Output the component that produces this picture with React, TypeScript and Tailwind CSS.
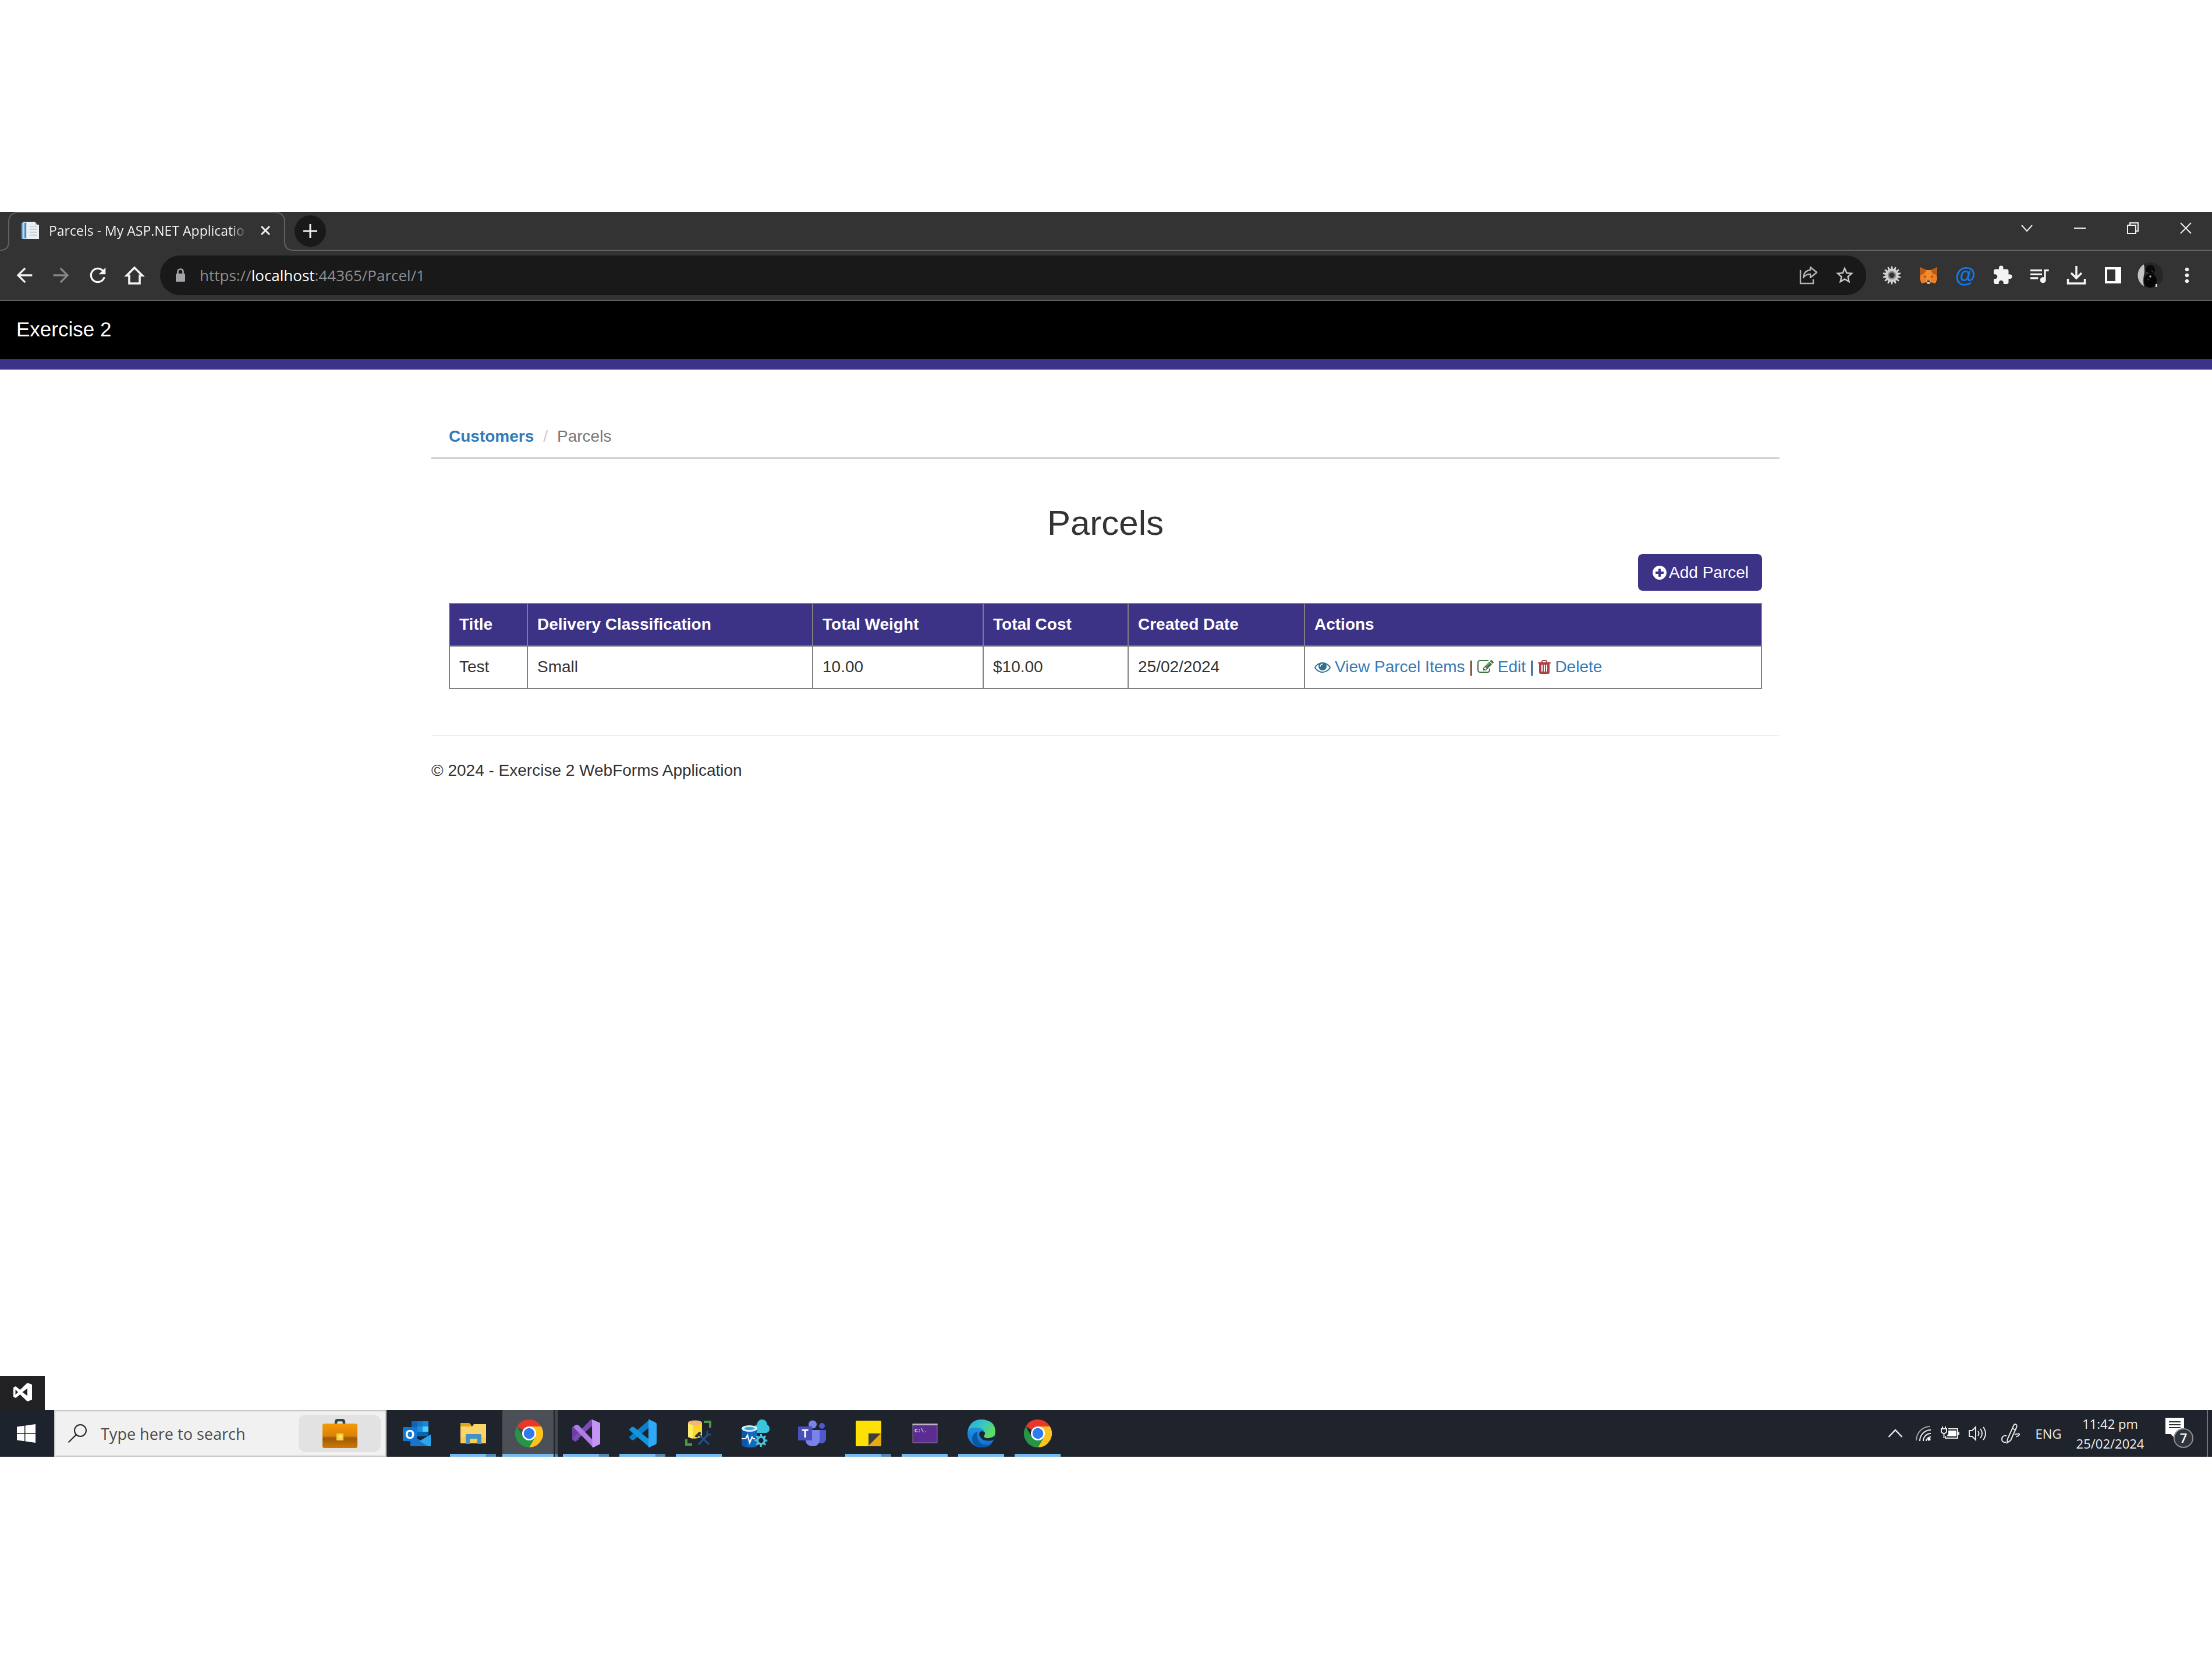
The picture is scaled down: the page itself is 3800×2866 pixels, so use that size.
import type { ReactNode } from "react";
import {
  MdArrowBack,
  MdArrowForward,
  MdExtension,
  MdMoreVert,
  MdQueueMusic,
  MdRefresh,
  MdStarBorder,
} from "react-icons/md";

/* ---------- Glyphs used inside the web page ---------- */

function Glyph({ d, className }: { d: string; className: string }) {
  return (
    <svg viewBox="0 0 1792 1792" fill="currentColor" aria-hidden="true" className={className}>
      <path d={d} />
    </svg>
  );
}

const EYE =
  "M1664 960q-152-236-381-353 61 104 61 225 0 185-131.5 316.5t-316.5 131.5-316.5-131.5-131.5-316.5q0-121 61-225-229 117-381 353 133 205 333.5 326.5t434.5 121.5 434.5-121.5 333.5-326.5zm-720-384q0-20-14-34t-34-14q-125 0-214.5 89.5t-89.5 214.5q0 20 14 34t34 14 34-14 14-34q0-86 61-147t147-61q20 0 34-14t14-34zm848 384q0 34-20 69-140 230-376.5 368.5t-499.5 138.5-499.5-139-376.5-368q-20-35-20-69t20-69q140-229 376.5-368t499.5-139 499.5 139 376.5 368q20 35 20 69z";
const PLUS =
  "M1344 960v-128q0-26-19-45t-45-19h-256v-256q0-26-19-45t-45-19h-128q-26 0-45 19t-19 45v256h-256q-26 0-45 19t-19 45v128q0 26 19 45t45 19h256v256q0 26 19 45t45 19h128q26 0 45-19t19-45v-256h256q26 0 45-19t19-45zm320-64q0 209-103 385.5t-279.5 279.5-385.5 103-385.5-103-279.5-279.5-103-385.5 103-385.5 279.5-279.5 385.5-103 385.5 103 279.5 279.5 103 385.5z";
const TRASH =
  "M704 1376v-704q0-14-9-23t-23-9h-64q-14 0-23 9t-9 23v704q0 14 9 23t23 9h64q14 0 23-9t9-23zm256 0v-704q0-14-9-23t-23-9h-64q-14 0-23 9t-9 23v704q0 14 9 23t23 9h64q14 0 23-9t9-23zm256 0v-704q0-14-9-23t-23-9h-64q-14 0-23 9t-9 23v704q0 14 9 23t23 9h64q14 0 23-9t9-23zm-544-992h448l-48-117q-7-9-17-11h-317q-10 2-17 11zm928 32v64q0 14-9 23t-23 9h-96v948q0 83-47 143.5t-113 60.5h-832q-66 0-113-58.5t-47-141.5v-952h-96q-14 0-23-9t-9-23v-64q0-14 9-23t23-9h309l70-167q15-37 54-63t79-26h320q40 0 79 26t54 63l70 167h309q14 0 23 9t9 23z";
const PENCIL =
  "M888 1184l116-116-152-152-116 116v56h96v96h56zm440-720q-16-16-33 1l-350 350q-17 17-1 33t33-1l350-350q17-17 1-33zm80 594v190q0 119-84.5 203.5t-203.5 84.5h-832q-119 0-203.5-84.5t-84.5-203.5v-832q0-119 84.5-203.5t203.5-84.5h832q63 0 117 25 15 7 18 23 3 17-9 29l-49 49q-14 14-32 8-23-6-45-6h-832q-66 0-113 47t-47 113v832q0 66 47 113t113 47h832q66 0 113-47t47-113v-126q0-13 9-22l64-64q15-15 35-7t20 29zm-96-738l288 288-672 672h-288v-288zm444 132l-92 92-288-288 92-92q28-28 68-28t68 28l152 152q28 28 28 68t-28 68z";

/* ---------- Browser chrome icons ---------- */

function PageFavicon() {
  return (
    <svg viewBox="0 0 32 32" className="size-8 shrink-0" aria-hidden="true">
      <path d="M1 3l7-2v30l-7-1z" fill="#7fb2d6" />
      <path d="M4 1h9v30H4z" fill="#c5dcec" />
      <path d="M6 3h3v26H6z" fill="#4b86b4" />
      <path d="M10 1h14l4 5h3v25H10z" fill="#e9eef2" />
      <path d="M15 9h12M15 14h13M15 19h13M15 24h13" stroke="#c3c9ce" strokeWidth="1.5" />
      <path d="M24 1l4 5h-4z" fill="#b9c3ca" />
    </svg>
  );
}

function LockIcon() {
  return (
    <svg viewBox="0 0 18 24" className="h-6 w-[18px]" aria-hidden="true">
      <path d="M4.500 10V6q0-4.500 4.500-4.500T13.500 6v4" fill="none" stroke="#a3a3a8" strokeWidth="2.600" />
      <rect x="1" y="9" width="16" height="14" rx="1.500" fill="#a3a3a8" />
    </svg>
  );
}

function HomeIcon() {
  return (
    <svg viewBox="0 0 36 36" className="size-9" aria-hidden="true" fill="none" stroke="#f4f4f4" strokeWidth="3.6">
      <path d="M18 5L4.500 18.500H9V32h18V18.500h4.500z" />
    </svg>
  );
}

function ShareIcon() {
  return (
    <svg viewBox="0 0 36 36" className="size-9" aria-hidden="true" fill="none" stroke="#b4b4b4" strokeWidth="2.400">
      <path d="M4 9v23h22v-7" />
      <path d="M21 4l11 9-11 9v-6q-8 0-12 6 1-12 12-13z" strokeLinejoin="round" />
    </svg>
  );
}

const GEAR_TEETH = Array.from({ length: 14 }, (_, i) => (i * 360) / 14);

function GearIcon() {
  return (
    <svg viewBox="0 0 32 32" className="size-8" aria-hidden="true">
      {GEAR_TEETH.map((a) => (
        <path key={a} d="M14 6L15 0.500h2L18 6z" fill="#d9d9d9" transform={`rotate(${a} 16 16)`} />
      ))}
      <circle cx="16" cy="16" r="8.500" fill="none" stroke="#cfcfcf" strokeWidth="5.500" />
      <circle cx="16" cy="16" r="6" fill="none" stroke="#8d8d8d" strokeWidth="2.500" />
    </svg>
  );
}

function FoxIcon() {
  return (
    <svg viewBox="0 0 32 32" className="size-8" aria-hidden="true">
      <path d="M1 2l11 5h8l11-5-1 14 1 6-3 8-8-2h-8l-8 2-3-8 1-6z" fill="#ef7f22" />
      <path d="M1 2l11 6-5 6-5 1zM31 2L20 8l5 6 5 1z" fill="#b85c1c" />
      <path d="M12 7h8l1 12-2 7h-6l-2-7z" fill="#f68a28" />
      <path d="M8 16l5 3-4 1zM24 16l-5 3 4 1z" fill="#8a4a1c" />
      <path d="M12 25h8l-1 5q-3 2-6 0z" fill="#d8c4b2" />
      <path d="M13.500 25h5l-.5 3h-4z" fill="#3a2a24" />
    </svg>
  );
}

function DownloadIcon() {
  return (
    <svg viewBox="0 0 36 36" className="size-9" aria-hidden="true" fill="none" stroke="#f4f4f4" strokeWidth="3.500">
      <path d="M18 2v20M9 14l9 9 9-9M3.500 24v8h29v-8" />
    </svg>
  );
}

function SidePanelIcon() {
  return (
    <svg viewBox="0 0 28 28" className="size-7" aria-hidden="true">
      <path fillRule="evenodd" d="M0 0h28v28H0zM4 4v20h14V4z" fill="#fff" />
    </svg>
  );
}

function AvatarIcon() {
  return (
    <svg viewBox="0 0 44 44" className="size-11" aria-hidden="true">
      <circle cx="22" cy="22" r="22" fill="#262626" />
      <path d="M11 3.200A22 22 0 0 0 11 40.800Q9 30 11 22T11 3.200z" fill="#c4c4c4" />
      <ellipse cx="22" cy="13" rx="8" ry="9" fill="#0a0a0a" />
      <ellipse cx="22" cy="31" rx="11" ry="12" fill="#060606" />
      <circle cx="22" cy="24" r="1.800" fill="#bbb" />
      <path d="M15 17l4 2M24 14l3 3M17 29l3 1" stroke="#444" strokeWidth="1.500" />
      <path d="M31 37h3v5h-3z" fill="#ddd" />
    </svg>
  );
}

/* ---------- Taskbar icons ---------- */

function VisualStudioGlyph() {
  return (
    <svg viewBox="0 0 32 32" className="size-8" aria-hidden="true">
      <path
        fillRule="evenodd"
        d="M24 0l8 3v26l-8 3L11.500 20 4 26l-4-2V8l4-2 7.500 6zM24 9.500L15.500 16 24 22.500zM3.500 11.500v9L8 16z"
        fill="#fff"
      />
    </svg>
  );
}

function WindowsIcon() {
  return (
    <svg viewBox="0 0 32 32" className="size-8" aria-hidden="true" fill="#fff">
      <path d="M0 4.500L13 2.800v12.500H0zM14.500 2.600L32 0v15.300H14.500zM0 16.800h13v12.400L0 27.500zM14.500 16.800H32V32l-17.500-2.500z" />
    </svg>
  );
}

function SearchIcon() {
  return (
    <svg viewBox="0 0 32 32" className="size-8 shrink-0" aria-hidden="true" fill="none" stroke="#222" strokeWidth="2">
      <circle cx="21" cy="11" r="10" />
      <path d="M14 18L0.500 31.500" />
    </svg>
  );
}

function BriefcaseIcon() {
  return (
    <svg viewBox="0 0 60 50" className="h-[50px] w-[60px]" aria-hidden="true">
      <defs>
        <linearGradient id="leather" x1="0" y1="0" x2="0" y2="1">
          <stop offset="0" stopColor="#f59a07" />
          <stop offset=".5" stopColor="#dc8204" />
          <stop offset=".6" stopColor="#9c5a0a" />
          <stop offset="1" stopColor="#d07a05" />
        </linearGradient>
      </defs>
      <path d="M23 10V6q0-4 4-4h6q4 0 4 4v4" fill="none" stroke="#2f4446" strokeWidth="4.500" />
      <rect y="8" width="60" height="42" rx="3" fill="url(#leather)" />
      <rect x="24" y="25" width="12" height="12" rx="1.500" fill="#f8cf3a" />
      <rect x="28" y="28" width="5" height="5" fill="#ffe887" />
    </svg>
  );
}

function OutlookIcon() {
  return (
    <svg viewBox="0 0 48 48" className="size-12" aria-hidden="true">
      <path d="M15 3h29v26H15z" fill="#1066b5" />
      <path d="M25 3h9v9h-9z" fill="#1478c8" />
      <path d="M34 3h10v9H34z" fill="#1a86d6" />
      <path d="M25 12h9v9h-9z" fill="#1f8fe0" />
      <path d="M34 12h10v9H34z" fill="#50d0fb" />
      <path d="M25 21h19v8H25z" fill="#0364b8" />
      <path d="M13 26l17 10 18-10v20H13z" fill="#1784d9" />
      <path d="M13 46l35-20v20z" fill="#2ba6ee" />
      <path d="M13 27v19h30z" fill="#1a72c9" />
      <rect y="13" width="24" height="24" rx="1.500" fill="#0f78d4" />
      <text x="12" y="32.500" textAnchor="middle" fontFamily="Open Sans" fontSize="21" fontWeight="bold" fill="#fff">
        O
      </text>
    </svg>
  );
}

function ExplorerIcon() {
  return (
    <svg viewBox="0 0 48 48" className="size-12" aria-hidden="true">
      <path d="M2 6h15l4 4v6H2z" fill="#e0a51c" />
      <path d="M2 12h20l3-4h21v33H2z" fill="#fbd56b" />
      <path d="M2 30h44v11H2z" fill="#f8cb57" />
      <path d="M11 27q0-2 2-2h23q2 0 2 2v15h-7v-9H18v9h-7z" fill="#3f93c6" />
    </svg>
  );
}

function ChromeIcon() {
  return (
    <svg viewBox="0 0 48 48" className="size-12" aria-hidden="true">
      <path d="M24 24L3.200 12A24 24 0 0 1 44.800 12z" fill="#e8372b" />
      <path d="M24 12h20.800A24 24 0 0 1 24 48l10.400-18z" fill="#fcc31e" />
      <path d="M3.200 12A24 24 0 0 0 24 48l10.400-18-20.800 0z" fill="#279447" />
      <circle cx="24" cy="24" r="12" fill="#fff" />
      <circle cx="24" cy="24" r="9.300" fill="#2f7af0" />
    </svg>
  );
}

function VisualStudioIcon() {
  return (
    <svg viewBox="0 0 48 48" className="size-12" aria-hidden="true">
      <path d="M0 13l5-3 6 3v22l-6 3-5-3z" fill="#6a3f9f" />
      <path d="M5 38l29-27V0h-2L1 32z" fill="#7a4cb3" />
      <path d="M5 10q3-2 6 0l25 26v12L2 13z" fill="#b07be6" />
      <path d="M34 0l14 6v36l-12 6-2-1z" fill="#b98af0" />
      <path d="M34 0l14 6v36l-12 6z" fill="#c79bf5" opacity=".7" />
    </svg>
  );
}

function VsCodeIcon() {
  return (
    <svg viewBox="0 0 48 48" className="size-12" aria-hidden="true">
      <path d="M1 31l4 4q2 1 4 0l27-22V0L1 30z" fill="#0b7fc9" />
      <path d="M1 17l4-4q2-1 4 0l27 22v13L1 18z" fill="#1494dc" />
      <path d="M35 0l11 5q2 1 2 3v32q0 2-2 3l-11 5q2-1 2-4V4q0-3-2-4z" fill="#2fa9f5" />
      <path d="M34 0h3v48h-3z" fill="#2fa9f5" />
    </svg>
  );
}

function SqlToolsIcon() {
  return (
    <svg viewBox="0 0 48 48" className="size-12" aria-hidden="true">
      <path d="M5 6v24q12 6 24-1V6z" fill="#fbd629" />
      <path d="M5 6v24q4 2 8 3V6z" fill="#fdeb6a" />
      <ellipse cx="17" cy="5.500" rx="12" ry="4" fill="#f4b27c" />
      <path d="M32 4h11v10M2 34v9h10" fill="none" stroke="#4c9a46" strokeWidth="4" />
      <path d="M23 43l17-18M24 26l17 17" stroke="#1c4f8f" strokeWidth="3.500" />
      <path d="M16 29l8-8 4 2-7 8z" fill="#1d3350" />
      <path d="M38 20v6h7" fill="none" stroke="#1c4f8f" strokeWidth="3" />
    </svg>
  );
}

const COG_TEETH = [0, 45, 90, 135, 180, 225, 270, 315];

function DataStudioIcon() {
  return (
    <svg viewBox="0 0 48 48" className="size-12" aria-hidden="true">
      <path d="M21 16q0-6 5-7 2-9 9-9 8 0 9 9 4 2 4 7 0 6-6 7H27q-6-1-6-7z" fill="#3cc4dc" />
      <path d="M0 16v28q6 5 16 4 8 0 11-3V16z" fill="#1469bd" />
      <path d="M0 16v28q4 3 9 4V16z" fill="#0c58a6" />
      <ellipse cx="13.500" cy="15.500" rx="13.500" ry="5.500" fill="#d6f4fa" />
      <ellipse cx="13.500" cy="15.500" rx="9" ry="2.800" fill="#3aa8d8" />
      <path d="M0 33h7l3-6 4 13 4-10 2 3h3" fill="none" stroke="#fff" strokeWidth="2.200" />
      {COG_TEETH.map((a) => (
        <path key={a} d="M32 25h2.800l.8 5h-4.400z" fill="#4cc3dd" transform={`rotate(${a} 33.300 36)`} />
      ))}
      <circle cx="33.300" cy="36" r="6" fill="#1f232b" stroke="#4cc3dd" strokeWidth="3.500" />
    </svg>
  );
}

function TeamsIcon() {
  return (
    <svg viewBox="0 0 48 48" className="size-12" aria-hidden="true">
      <circle cx="25" cy="8.500" r="7" fill="#7b83eb" />
      <circle cx="41" cy="11" r="5" fill="#5059c9" />
      <path d="M34 18h14v15q-1 8-8 8-5 0-6-3z" fill="#5059c9" />
      <path d="M13 18h24v17q-1 11-12 11-9 0-12-8z" fill="#7b83eb" />
      <path d="M0 12h24v24H0z" fill="#4a4fbd" />
      <text x="12" y="31" textAnchor="middle" fontFamily="Open Sans" fontSize="20" fontWeight="bold" fill="#fff">
        T
      </text>
    </svg>
  );
}

function StickyNotesIcon() {
  return (
    <svg viewBox="0 0 48 48" className="size-12" aria-hidden="true">
      <rect x="2" y="2" width="44" height="44" rx="2" fill="#fde005" />
      <path d="M24 24h22v22H24z" fill="#e5ac12" />
      <path d="M24 24h21L24 45z" fill="#403d3a" />
    </svg>
  );
}

function TerminalIcon() {
  return (
    <svg viewBox="0 0 48 48" className="size-12" aria-hidden="true">
      <path d="M3 8h42v32H3z" fill="#5c2d91" stroke="#8a7a9b" />
      <path d="M2.500 7h43v3h-43z" fill="#b9b3c0" />
      <text x="6" y="22" fontFamily="Liberation Mono" fontSize="9" fontWeight="bold" fill="#e8e0f0">
        {"C:\\."}
      </text>
    </svg>
  );
}

function EdgeIcon() {
  return (
    <svg viewBox="0 0 48 48" className="size-12" aria-hidden="true">
      <defs>
        <linearGradient id="edgeTop" x1="0" y1="0" x2="1" y2=".6">
          <stop offset="0" stopColor="#2aa7e0" />
          <stop offset=".5" stopColor="#38c6c4" />
          <stop offset="1" stopColor="#62dd58" />
        </linearGradient>
        <linearGradient id="edgeBody" x1="0" y1="0" x2="0" y2="1">
          <stop offset="0" stopColor="#2a9fe6" />
          <stop offset="1" stopColor="#0f6fd0" />
        </linearGradient>
      </defs>
      <circle cx="24" cy="24" r="24" fill="url(#edgeBody)" />
      <path d="M17 27q0 16 16 17 6 0 11-4-8 9-20 8Q8 46 8 32q1-8 9-11z" fill="#0c56a8" />
      <path d="M1 19Q5 0 24 0q23 1 24 20 0 10-12 12-8 0-8-3 2-2 2-5-1-9-12-10Q5 13 1 19z" fill="url(#edgeTop)" />
      <path d="M20 25q1-5 5-5 6 1 5 5-2 2-2 4 2 4 9 3 5 0 9-3l2 0q-2 6-6 7Q23 39 20 25z" fill="#1f232b" />
    </svg>
  );
}

/* ---------- System tray icons ---------- */

const tray = "fill-none stroke-[#e8e8e8] stroke-2";

function ChevronUpIcon() {
  return (
    <svg viewBox="0 0 26 16" className={`h-4 w-[26px] ${tray}`} aria-hidden="true">
      <path d="M1.500 14L13 2l11.500 12" strokeWidth="2.500" />
    </svg>
  );
}

function WifiIcon() {
  return (
    <svg viewBox="0 0 28 28" className={`size-7 ${tray}`} aria-hidden="true">
      <path d="M2 26A24 24 0 0 1 26 2" stroke="#9a9ea5" />
      <path d="M8 27A19 19 0 0 1 27 8M14 27A13 13 0 0 1 27 14M19 27a8 8 0 0 1 8-7" />
      <circle cx="24" cy="24" r="2.500" fill="#fff" stroke="none" />
    </svg>
  );
}

function BatteryIcon() {
  return (
    <svg viewBox="0 0 32 26" className={`h-[26px] w-8 ${tray}`} aria-hidden="true">
      <path d="M13 5h16v16H8v-3" />
      <path d="M30 10h2v6h-2z" fill="#e8e8e8" stroke="none" />
      <path d="M13 8h14v10H10l3-4z" fill="#fff" stroke="none" />
      <path d="M1 5h9v5q-1 3-4.500 3T1 10zM3 1v4M8 1v4M5.500 13v8" />
    </svg>
  );
}

function SpeakerIcon() {
  return (
    <svg viewBox="0 0 32 28" className={`h-7 w-8 ${tray}`} aria-hidden="true">
      <path d="M1 9h5l6-6v22l-6-6H1z" />
      <path d="M16 10q3 4 0 8M20 6q6 8 0 16" />
      <path d="M25 3q8 11 0 22" />
    </svg>
  );
}

function PenIcon() {
  return (
    <svg viewBox="0 0 34 36" className={`h-9 w-[34px] ${tray}`} aria-hidden="true">
      <path d="M25 2q4 1 2 6L17 30l-6 4 1-7L22 5q1-3 3-3zM20 9l5 3" />
      <path d="M10 22q-8-1-8 6 0 6 7 5M24 20q9-3 8 0-1 3-6 3" />
    </svg>
  );
}

function NotificationIcon() {
  return (
    <svg viewBox="0 0 48 56" className="h-14 w-12" aria-hidden="true">
      <path d="M0 1h32v28H16l-1 6-6-6H0z" fill="#fff" />
      <path d="M6 8h20M6 13h20M6 18h20" stroke="#2a2f36" strokeWidth="2" />
      <circle cx="31" cy="36" r="16" fill="#30343b" stroke="#8b8e93" strokeWidth="2" />
      <text x="31" y="44" textAnchor="middle" fontFamily="Open Sans" fontSize="22" fontWeight="600" fill="#fff">
        7
      </text>
    </svg>
  );
}

/* ---------- Browser window ---------- */

function ToolButton({ label, children }: { label: string; children: ReactNode }) {
  return (
    <button type="button" aria-label={label} className="flex flex-1 items-center justify-center text-[#f4f4f4]">
      {children}
    </button>
  );
}

function WindowButton({ label, d }: { label: string; d: string }) {
  return (
    <button type="button" aria-label={label} className="flex h-14 w-[91px] items-center justify-center">
      <svg viewBox="0 0 20 20" className="size-5 fill-none stroke-[#f0f0f0] stroke-2" aria-hidden="true">
        <path d={d} />
      </svg>
    </button>
  );
}

function TabStrip() {
  return (
    <div className="flex h-[67px] items-end">
      <svg viewBox="0 0 16 16" className="size-4 shrink-0 fill-none stroke-[#616161] stroke-2" aria-hidden="true">
        <path d="M0 15q15 0 15-15" />
      </svg>
      <div className="-ml-0.5 flex h-[67px] w-[476px] flex-col">
        <div className="flex h-[51px] shrink-0 items-start gap-4 rounded-t-2xl border-x-2 border-t-2 border-[#616161] pt-[14px] pr-4 pl-5">
          <PageFavicon />
          <span className="flex-1 bg-linear-to-r from-[#fafafa] from-92% to-[#444] bg-clip-text font-['Open_Sans','Noto_Sans',sans-serif] text-[23px] leading-8 whitespace-nowrap text-transparent">
            Parcels - My ASP.NET Applicatio
          </span>
          <button type="button" aria-label="Close tab" className="flex size-8 items-center justify-center">
            <svg viewBox="0 0 18 18" className="size-[18px] stroke-[#f0f0f0] stroke-3" aria-hidden="true">
              <path d="M2 2l14 14M16 2L2 16" />
            </svg>
          </button>
        </div>
      </div>
      <svg viewBox="0 0 16 16" className="-ml-0.5 size-4 shrink-0 fill-none stroke-[#616161] stroke-2" aria-hidden="true">
        <path d="M1 0q0 15 15 15" />
      </svg>
      <div className="flex h-full flex-1 items-start justify-between border-b-2 border-[#616161]">
        <button
          type="button"
          aria-label="New tab"
          className="mt-[6px] ml-0.5 flex size-[54px] items-center justify-center rounded-full bg-[#191919]"
        >
          <svg viewBox="0 0 24 24" className="size-6 stroke-[#f0f0f0] stroke-3" aria-hidden="true">
            <path d="M12 0v24M0 12h24" />
          </svg>
        </button>
        <div className="flex">
          <WindowButton label="Search tabs" d="M1 5l9 10 9-10" />
          <WindowButton label="Minimise" d="M0 10h20" />
          <WindowButton label="Restore" d="M1 5h14v14H1zM5 5V1h14v14h-4" />
          <WindowButton label="Close window" d="M1 1l18 18M19 1L1 19" />
        </div>
      </div>
    </div>
  );
}

function Toolbar() {
  return (
    <div className="flex h-[86px] items-center gap-3 border-b-2 border-[#5c5c5c] pr-[11px] pl-[10px]">
      <div className="flex w-[253px]">
        <ToolButton label="Back">
          <MdArrowBack className="size-10" />
        </ToolButton>
        <ToolButton label="Forward">
          <MdArrowForward className="size-10 text-[#868686]" />
        </ToolButton>
        <ToolButton label="Reload">
          <MdRefresh className="size-10" />
        </ToolButton>
        <ToolButton label="Home">
          <HomeIcon />
        </ToolButton>
      </div>
      <div className="flex h-[68px] flex-1 items-center rounded-full bg-[#191919] px-[26px]">
        <LockIcon />
        <div className="ml-6 flex-1 font-['Open_Sans','Noto_Sans',sans-serif] text-[26px] leading-10 text-[#8f8f8f]">
          https://<span className="text-white">localhost</span>:44365/Parcel/1
        </div>
        <button type="button" aria-label="Share" className="flex w-[62px] justify-center">
          <ShareIcon />
        </button>
        <button type="button" aria-label="Bookmark" className="-mr-5 flex w-[62px] justify-center">
          <MdStarBorder className="size-9 text-[#c8c8c8]" />
        </button>
      </div>
      <div className="flex w-[571px]">
        <ToolButton label="Settings extension">
          <GearIcon />
        </ToolButton>
        <ToolButton label="Wallet extension">
          <FoxIcon />
        </ToolButton>
        <ToolButton label="Mail extension">
          <span className="font-['Liberation_Sans',sans-serif] text-[36px] leading-9 font-bold text-[#0f7bf0]">@</span>
        </ToolButton>
        <ToolButton label="Extensions">
          <MdExtension className="size-9" />
        </ToolButton>
        <ToolButton label="Media">
          <MdQueueMusic className="size-10" />
        </ToolButton>
        <ToolButton label="Downloads">
          <DownloadIcon />
        </ToolButton>
        <ToolButton label="Side panel">
          <SidePanelIcon />
        </ToolButton>
        <ToolButton label="Profile">
          <AvatarIcon />
        </ToolButton>
        <ToolButton label="Menu">
          <MdMoreVert className="size-10" />
        </ToolButton>
      </div>
    </div>
  );
}

/* ---------- Web page ---------- */

const HEADINGS = ["Title", "Delivery Classification", "Total Weight", "Total Cost", "Created Date", "Actions"];
const PARCELS = [{ title: "Test", size: "Small", weight: "10.00", cost: "$10.00", created: "25/02/2024" }];
const cell = "border-2 border-[#808080] px-4 pt-[15px] pb-4 text-left";
const link = "text-[#337ab7]";

function ParcelTable() {
  return (
    <table className="mt-[21px] w-full table-fixed border-collapse">
      <colgroup>
        <col className="w-[134px]" />
        <col className="w-[490px]" />
        <col className="w-[293px]" />
        <col className="w-[249px]" />
        <col className="w-[303px]" />
        <col />
      </colgroup>
      <thead>
        <tr className="bg-[#3c3286] text-white">
          {HEADINGS.map((h) => (
            <th key={h} scope="col" className={cell}>
              {h}
            </th>
          ))}
        </tr>
      </thead>
      <tbody>
        {PARCELS.map((p) => (
          <tr key={p.title}>
            <td className={cell}>{p.title}</td>
            <td className={cell}>{p.size}</td>
            <td className={cell}>{p.weight}</td>
            <td className={cell}>{p.cost}</td>
            <td className={cell}>{p.created}</td>
            <td className={cell}>
              <div className="flex items-center gap-[7px]">
                <Glyph d={EYE} className="size-7 text-[#31708f]" />
                <a href="#view" className={link}>
                  View Parcel Items
                </a>
                <span>|</span>
                <Glyph d={PENCIL} className="size-7 text-[#3c763d]" />
                <a href="#edit" className={link}>
                  Edit
                </a>
                <span>|</span>
                <Glyph d={TRASH} className="-mx-[3px] size-7 text-[#a94442]" />
                <a href="#delete" className={link}>
                  Delete
                </a>
              </div>
            </td>
          </tr>
        ))}
      </tbody>
    </table>
  );
}

function WebPage() {
  return (
    <div className="flex-1 bg-white font-['Liberation_Sans',Arial,sans-serif] text-[28px] leading-10 text-[#333]">
      <nav className="flex h-[118px] items-center border-b-[18px] border-[#3c3286] bg-black px-7 pb-0.5">
        <a href="#home" className="text-[35px] text-white">
          Exercise 2
        </a>
      </nav>
      <main className="pr-[34px] pl-8">
        <div className="mx-auto max-w-[2316px]">
          <ol className="mt-[95px] flex border-b-2 border-[#bdbdbd] px-[30px] pb-4">
            <li>
              <a href="#customers" className="font-bold text-[#337ab7]">
                Customers
              </a>
            </li>
            <li className="px-4 text-[#ccc]">/</li>
            <li className="text-[#777]">Parcels</li>
          </ol>
          <div className="px-[30px]">
            <h2 className="mt-[78px] text-center text-[60px] leading-[66px]">Parcels</h2>
            <div className="mt-5 flex justify-end">
              <button
                type="button"
                className="flex h-[63px] items-center gap-0.5 rounded-lg bg-[#3c3286] px-[23px] text-white"
              >
                <Glyph d={PLUS} className="size-7" />
                Add Parcel
              </button>
            </div>
            <ParcelTable />
          </div>
          <hr className="mt-[79px] border-t-2 border-[#eee]" />
          <footer className="mt-[39px]">© 2024 - Exercise 2 WebForms Application</footer>
        </div>
      </main>
    </div>
  );
}

/* ---------- Taskbar ---------- */

type Task = { name: string; icon: ReactNode; open?: boolean; many?: boolean; active?: boolean };

const TASKS: Task[] = [
  { name: "Outlook", icon: <OutlookIcon /> },
  { name: "File Explorer", icon: <ExplorerIcon />, open: true, many: true },
  { name: "Chrome", icon: <ChromeIcon />, active: true },
  { name: "Visual Studio", icon: <VisualStudioIcon />, open: true, many: true },
  { name: "Visual Studio Code", icon: <VsCodeIcon />, open: true, many: true },
  { name: "SQL Server Management Studio", icon: <SqlToolsIcon />, open: true },
  { name: "Azure Data Studio", icon: <DataStudioIcon /> },
  { name: "Teams", icon: <TeamsIcon /> },
  { name: "Sticky Notes", icon: <StickyNotesIcon />, open: true, many: true },
  { name: "Command Prompt", icon: <TerminalIcon />, open: true },
  { name: "Edge", icon: <EdgeIcon />, open: true },
  { name: "Chrome profile", icon: <ChromeIcon />, open: true },
];

function TaskButton({ task }: { task: Task }) {
  if (task.active) {
    return (
      <button type="button" aria-label={task.name} className="flex h-full w-[97px] pl-0.5">
        <span className="flex h-full flex-1 items-end justify-center border-b-[5px] border-[#76b9ed] bg-[#4b4f56] pb-[11px] pl-1">
          {task.icon}
        </span>
        <span className="ml-0.5 h-full w-[5px] border-b-[5px] border-[#5686ad] bg-[#43474e]" />
      </button>
    );
  }
  return (
    <button type="button" aria-label={task.name} className="flex h-full w-[97px] flex-col items-center justify-end">
      {task.icon}
      <span className="mt-[11px] flex h-[5px] w-[79px]">
        {task.open && <span className="flex-1 bg-[#76b9ed]" />}
        {task.many && <span className="w-[17px] bg-[#5686ad]" />}
      </span>
    </button>
  );
}

function Taskbar() {
  return (
    <div className="flex h-20 items-stretch bg-[#1f232b] font-['Open_Sans','Noto_Sans',sans-serif] text-[#f0f0f0]">
      <button type="button" aria-label="Start" className="flex w-[93px] items-center justify-center bg-[#1c232c] pr-1">
        <WindowsIcon />
      </button>
      <div className="flex w-[571px] items-center border-2 border-[#c6c6c6] bg-[#f1f1f1] pr-2 pl-[22px]">
        <SearchIcon />
        <input
          type="text"
          aria-label="Search"
          placeholder="Type here to search"
          className="ml-6 h-12 w-0 flex-1 text-[27px] text-[#333] placeholder:text-[#4a4a4a]"
        />
        <div className="flex h-16 w-[141px] items-center justify-center rounded-xl bg-[#e2e2e2]">
          <BriefcaseIcon />
        </div>
      </div>
      <div className="ml-[3px] flex flex-1">
        {TASKS.map((t) => (
          <TaskButton key={t.name} task={t} />
        ))}
      </div>
      <div className="flex items-center">
        <span className="flex w-12 justify-center">
          <ChevronUpIcon />
        </span>
        <span className="flex w-12 justify-center">
          <WifiIcon />
        </span>
        <span className="flex w-11 justify-center">
          <BatteryIcon />
        </span>
        <span className="flex w-[52px] justify-center">
          <SpeakerIcon />
        </span>
        <span className="flex w-[60px] justify-center">
          <PenIcon />
        </span>
        <span className="w-[70px] text-center text-[22px]">ENG</span>
        <span className="w-[142px] text-center text-[22px] leading-[34px]">
          11:42 pm
          <br />
          25/02/2024
        </span>
        <span className="flex w-[95px] justify-center">
          <NotificationIcon />
        </span>
        <span className="h-full w-[9px] border-l-2 border-[#70747a]" />
      </div>
    </div>
  );
}

export default function App() {
  return (
    <div className="flex min-h-screen flex-col bg-white pt-[364px] pb-[363px]">
      <header className="bg-[#333]">
        <TabStrip />
        <Toolbar />
      </header>
      <WebPage />
      <div className="flex h-[59px] w-[77px] items-center justify-center bg-[#212124] pb-1">
        <VisualStudioGlyph />
      </div>
      <Taskbar />
    </div>
  );
}
